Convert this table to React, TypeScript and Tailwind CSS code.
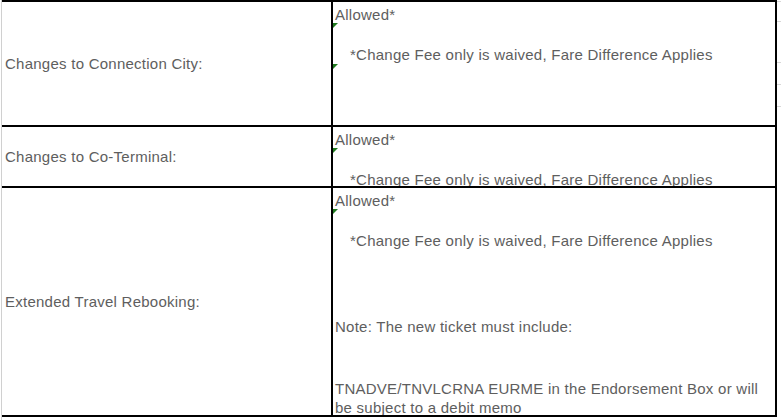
const TEXT = 'text-[#5e5e5e]';

function Tick({ top, left }: { top: number; left: number }) {
  // little green error-indicator triangles from the sheet
  return (
    <svg
      className="absolute"
      style={{ top, left }}
      width="5"
      height="5"
      viewBox="0 0 5 5"
    >
      <polygon points="0,0 5,0 0,5" fill="#1f7a1f" />
    </svg>
  );
}

function Row({
  label,
  heightClass,
  children,
}: {
  label: string;
  heightClass: string;
  children: React.ReactNode;
}) {
  return (
    <div className={`flex ${heightClass} border-b-2 border-black`}>
      <div className={`w-[329px] flex items-center pl-[3px] ${TEXT}`}>{label}</div>
      <div className={`flex-1 border-l-2 border-r-2 border-black overflow-hidden pt-[3px] pl-[2px] ${TEXT}`}>
        {children}
      </div>
    </div>
  );
}

export default function App() {
  return (
    <div
      className="relative w-[781px] h-[420px] bg-white overflow-hidden flex text-[15px] leading-[20px] tracking-[0.25px]"
      style={{ fontFamily: '"Liberation Sans", Arial, sans-serif' }}
    >
      {/* left sheet gridline */}
      <div className="w-[1px] bg-white" />
      <div className="w-[1px] bg-[#d0d0d0]" />

      {/* table */}
      <div className="w-[775px] flex flex-col">
        <div className="h-[2px] bg-black" />
        <Row label="Changes to Connection City:" heightClass="h-[125px]">
          <div>Allowed*</div>
          <div className="mt-[20px] pl-[15px] whitespace-nowrap">
            *Change Fee only is waived, Fare Difference Applies
          </div>
        </Row>
        <Row label="Changes to Co-Terminal:" heightClass="h-[61px]">
          <div>Allowed*</div>
          <div className="mt-[20px] pl-[15px] whitespace-nowrap">
            *Change Fee only is waived, Fare Difference Applies
          </div>
        </Row>
        <Row label="Extended Travel Rebooking:" heightClass="h-[229px]">
          <div>Allowed*</div>
          <div className="mt-[20px] pl-[15px] whitespace-nowrap">
            *Change Fee only is waived, Fare Difference Applies
          </div>
          <div className="mt-[66px] whitespace-nowrap">Note: The new ticket must include:</div>
          <div className="mt-[42px] leading-[19px] whitespace-nowrap">
            TNADVE/TNVLCRNA EURME in the Endorsement Box or will
            <br />
            be subject to a debit memo
          </div>
        </Row>
      </div>

      {/* right sheet margin with faint gridline ticks */}
      <div className="relative flex-1">
        <div className="absolute left-0 right-0 top-[1px] h-[1px] bg-[#d8d8d8]" />
        <div className="absolute left-0 right-0 top-[21px] h-[1px] bg-[#d8d8d8]" />
        <div className="absolute left-0 right-0 top-[62px] h-[1px] bg-[#d8d8d8]" />
        <div className="absolute left-0 right-0 top-[84px] h-[1px] bg-[#d8d8d8]" />
        <div className="absolute left-0 right-0 top-[106px] h-[1px] bg-[#d8d8d8]" />
      </div>

      <Tick top={23} left={333} />
      <Tick top={64} left={333} />
      <Tick top={148} left={333} />
      <Tick top={209} left={333} />
    </div>
  );
}
